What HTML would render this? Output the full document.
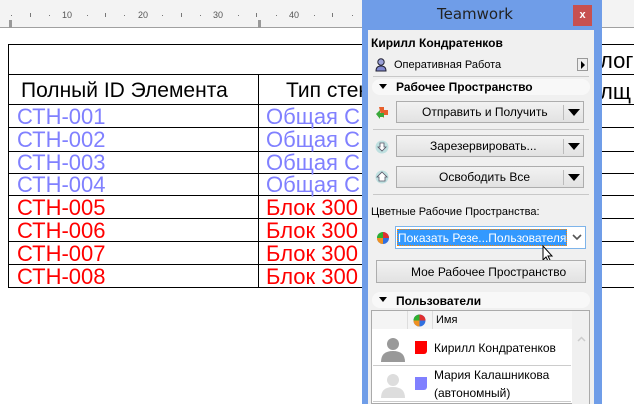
<!DOCTYPE html>
<html><head><meta charset="utf-8"><style>
*{margin:0;padding:0;box-sizing:border-box}
body{width:634px;height:404px;overflow:hidden;background:#fff;font-family:"Liberation Sans",sans-serif;position:relative}
.abs{position:absolute}
.ruler{left:0;top:0;width:634px;height:28px;background:#f3f3f3;border-bottom:1px solid #a0a0a0}
.tk{position:absolute;background:#777;width:1px}
.rn{position:absolute;top:10px;font-size:9px;color:#555}
.hl{position:absolute;height:1px;background:#000}
.vl{position:absolute;width:1px;background:#000}
.t{position:absolute;font-size:22px;line-height:22px;white-space:nowrap}
.b{color:#8080ff}.r{color:#ff0000}
.panel{left:362px;top:0;width:240px;height:404px;background:#6f9de8}
.inner{left:368px;top:30px;width:226px;height:374px;background:#f0f0f0}
.s{font-size:12px;font-family:"Liberation Sans",sans-serif;position:absolute;white-space:nowrap;color:#000}
.btn{position:absolute;border:1px solid #adadad;background:linear-gradient(#f2f2f2,#e2e2e2);height:22px}
.sep{position:absolute;height:1px;background:#c8c8c8;left:373px;width:216px}
.tri{position:absolute;width:0;height:0;border-left:6px solid transparent;border-right:6px solid transparent;border-top:7px solid #000}
</style></head><body>
<div class="abs ruler">
<div class="tk" style="left:9px;top:20px;height:8px;width:3px;background:#999"></div>
<div class="tk" style="left:258px;top:20px;height:8px;width:3px;background:#999"></div>
<div class="tk" style="left:30px;top:13px;height:4px"></div>
<div class="tk" style="left:105px;top:13px;height:4px"></div>
<div class="tk" style="left:181px;top:13px;height:4px"></div>
<div class="tk" style="left:256px;top:13px;height:4px"></div>
<div class="tk" style="left:332px;top:13px;height:4px"></div>
<div class="tk" style="left:11px;top:15px;height:1px"></div>
<div class="tk" style="left:49px;top:15px;height:1px"></div>
<div class="tk" style="left:87px;top:15px;height:1px"></div>
<div class="tk" style="left:124px;top:15px;height:1px"></div>
<div class="tk" style="left:162px;top:15px;height:1px"></div>
<div class="tk" style="left:200px;top:15px;height:1px"></div>
<div class="tk" style="left:238px;top:15px;height:1px"></div>
<div class="tk" style="left:276px;top:15px;height:1px"></div>
<div class="tk" style="left:314px;top:15px;height:1px"></div>
<div class="tk" style="left:352px;top:15px;height:1px"></div>
<span class="rn" style="left:62px">10</span><span class="rn" style="left:138px">20</span><span class="rn" style="left:213px">30</span><span class="rn" style="left:289px">40</span>
</div>
<div class="hl" style="left:8px;top:44px;width:626px"></div>
<div class="hl" style="left:8px;top:74px;width:626px"></div>
<div class="hl" style="left:8px;top:104px;width:626px"></div>
<div class="hl" style="left:8px;top:127px;width:626px"></div>
<div class="hl" style="left:8px;top:151px;width:626px"></div>
<div class="hl" style="left:8px;top:173px;width:626px"></div>
<div class="hl" style="left:8px;top:195px;width:626px"></div>
<div class="hl" style="left:8px;top:218px;width:626px"></div>
<div class="hl" style="left:8px;top:241px;width:626px"></div>
<div class="hl" style="left:8px;top:264px;width:626px"></div>
<div class="hl" style="left:8px;top:287px;width:626px"></div>
<div class="vl" style="left:8px;top:44px;height:244px"></div>
<div class="vl" style="left:258px;top:74px;height:214px"></div>
<div class="t" style="left:21px;top:80px;font-size:21px">Полный ID Элемента</div>
<div class="t" style="left:286px;top:80px;font-size:21px">Тип стены</div>
<div class="t" style="left:600px;top:50px">лог</div>
<div class="t" style="left:600px;top:81px">лщ</div>
<div class="t b" style="left:17px;top:106px">СТН-001</div><div class="t b" style="left:266px;top:106px">Общая С</div>
<div class="t b" style="left:17px;top:129px">СТН-002</div><div class="t b" style="left:266px;top:129px">Общая С</div>
<div class="t b" style="left:17px;top:152px">СТН-003</div><div class="t b" style="left:266px;top:152px">Общая С</div>
<div class="t b" style="left:17px;top:174px">СТН-004</div><div class="t b" style="left:266px;top:174px">Общая С</div>
<div class="t r" style="left:17px;top:197px">СТН-005</div><div class="t r" style="left:266px;top:197px">Блок 300</div>
<div class="t r" style="left:17px;top:220px">СТН-006</div><div class="t r" style="left:266px;top:220px">Блок 300</div>
<div class="t r" style="left:17px;top:243px">СТН-007</div><div class="t r" style="left:266px;top:243px">Блок 300</div>
<div class="t r" style="left:17px;top:266px">СТН-008</div><div class="t r" style="left:266px;top:266px">Блок 300</div>

<div class="abs panel"></div>
<div class="abs" style="left:362px;top:5px;width:226px;text-align:center;font-size:15px;color:#222;font-family:'DejaVu Sans',sans-serif">Teamwork</div>
<div class="abs" style="left:573px;top:5px;width:19px;height:21px;background:#c75050;color:#fff;font-size:11px;text-align:center;line-height:21px;font-weight:bold">x</div>
<div class="abs inner"></div>
<div class="s" style="left:371px;top:36px;font-weight:bold">Кирилл Кондратенков</div>
<svg class="abs" style="left:375px;top:58px" width="12" height="14"><circle cx="6" cy="4" r="3.2" fill="#9aa0d8" stroke="#223" stroke-width="1"/><path d="M1 13 Q1 8 6 8 Q11 8 11 13Z" fill="#8088d0" stroke="#223"/></svg>
<div class="s" style="left:394px;top:59px;font-size:11px">Оперативная Работа</div>
<div class="abs" style="left:577px;top:58px;width:11px;height:13px;border:1px solid #999;background:#eee"><div style="position:absolute;left:3px;top:2px;border-top:4px solid transparent;border-bottom:4px solid transparent;border-left:4px solid #000"></div></div>
<div class="sep" style="top:76px"></div>
<div class="abs" style="left:372px;top:79px;width:218px;height:16px;background:#f8f8f8;border-radius:8px"></div>
<div class="tri" style="left:379px;top:84px;border-width:5px 4px 0 4px"></div>
<div class="s" style="left:396px;top:80px;font-weight:bold">Рабочее Пространство</div>
<svg class="abs" style="left:375px;top:106px" width="14" height="14"><path d="M4 1h5v3h4v5h-4v3l-3-3z" fill="#e8602c"/><path d="M1 8l4-4v3h4v4h-4v2z" fill="#3aa83a"/></svg>
<div class="btn" style="left:396px;top:101px;width:188px"><span class="s" style="left:25px;top:3px">Отправить и Получить</span><div style="position:absolute;left:166px;top:3px;width:1px;height:15px;background:#bbb"></div><div class="tri" style="left:171px;top:7px"></div></div>
<div class="sep" style="top:129px"></div>
<svg class="abs" style="left:375px;top:140px" width="14" height="14"><circle cx="7" cy="7" r="6.5" fill="#bfe0e0"/><path d="M5 3h4v4h2l-4 4-4-4h2z" fill="#fff" stroke="#556" stroke-width=".8"/></svg>
<div class="btn" style="left:396px;top:135px;width:188px"><span class="s" style="left:33px;top:3px">Зарезервировать...</span><div style="position:absolute;left:166px;top:3px;width:1px;height:15px;background:#bbb"></div><div class="tri" style="left:171px;top:7px"></div></div>
<svg class="abs" style="left:375px;top:170px" width="14" height="14"><circle cx="7" cy="7" r="6.5" fill="#bfe0e0"/><path d="M7 2l5 5h-2v4h-6v-4h-2z" fill="#fff" stroke="#556" stroke-width=".8"/></svg>
<div class="btn" style="left:396px;top:166px;width:188px"><span class="s" style="left:42px;top:3px">Освободить Все</span><div style="position:absolute;left:166px;top:3px;width:1px;height:15px;background:#bbb"></div><div class="tri" style="left:171px;top:7px"></div></div>
<div class="sep" style="top:194px"></div>
<div class="s" style="left:371px;top:206px;font-size:11px">Цветные Рабочие Пространства:</div>
<svg class="abs" style="left:376px;top:231px" width="14" height="14"><circle cx="7" cy="7" r="6" fill="#3070e0"/><path d="M7 7L7 1A6 6 0 0 1 13 7z" fill="#e03030"/><path d="M7 7L1 7A6 6 0 0 1 7 1z" fill="#30b030"/><path d="M7 7L7 13A6 6 0 0 1 1 7z" fill="#f09020"/></svg>
<div class="abs" style="left:395px;top:226px;width:191px;height:23px;border:1px solid #7eb4ea;background:#fff"></div>
<div class="abs" style="left:397px;top:229px;width:170px;height:17px;background:#3399ff;border:1px dotted #f80"></div>
<div class="s" style="left:398px;top:231px;color:#fff">Показать Резе...Пользователям</div>
<svg class="abs" style="left:572px;top:234px" width="10" height="7"><path d="M1 1l4 4 4-4" stroke="#555" stroke-width="1.6" fill="none"/></svg>
<svg class="abs" style="left:542px;top:245px" width="12" height="18"><path d="M1 1v14l3-3 3 6 2-1-3-6h4z" fill="#fff" stroke="#000"/></svg>
<div class="btn" style="left:376px;top:260px;width:210px;height:23px"><span class="s" style="left:34px;top:4px">Мое Рабочее Пространство</span></div>
<div class="abs" style="left:372px;top:292px;width:218px;height:16px;background:#f8f8f8;border-radius:8px"></div>
<div class="tri" style="left:379px;top:297px;border-width:5px 4px 0 4px"></div>
<div class="s" style="left:396px;top:294px;font-weight:bold">Пользователи</div>
<div class="abs" style="left:371px;top:310px;width:219px;height:94px;border:1px solid #aaa;background:#fff"></div>
<div class="abs" style="left:372px;top:311px;width:200px;height:18px;background:#f4f4f4"></div>
<div class="abs" style="left:572px;top:311px;width:17px;height:93px;background:#f0f0f0"></div>
<div class="abs" style="left:407px;top:311px;width:1px;height:18px;background:#ddd"></div>
<div class="abs" style="left:432px;top:311px;width:1px;height:18px;background:#ddd"></div>
<svg class="abs" style="left:413px;top:314px" width="13" height="13"><circle cx="6.5" cy="6.5" r="6" fill="#3070e0"/><path d="M6.5 6.5V.5A6 6 0 0 1 12.5 6.5z" fill="#e03030"/><path d="M6.5 6.5H.5A6 6 0 0 1 6.5 .5z" fill="#30b030"/><path d="M6.5 6.5v6A6 6 0 0 1 .5 6.5z" fill="#f09020"/></svg>
<div class="s" style="left:436px;top:314px;font-size:11px">Имя</div>
<svg class="abs" style="left:577px;top:336px" width="9" height="6"><path d="M1 5l3.5-3.5L8 5" stroke="#ccc" stroke-width="1.5" fill="none"/></svg>
<svg class="abs" style="left:380px;top:336px" width="26" height="26"><circle cx="13" cy="8" r="6" fill="#999"/><path d="M1 26Q1 15 13 15Q25 15 25 26z" fill="#999"/></svg>
<div class="abs" style="left:415px;top:341px;width:12px;height:13px;background:#f00;border-radius:0 0 3px 0"></div>
<div class="s" style="left:434px;top:341px">Кирилл Кондратенков</div>
<div class="abs" style="left:373px;top:365px;width:198px;height:1px;background:#ccc"></div>
<svg class="abs" style="left:380px;top:372px" width="26" height="26"><circle cx="13" cy="8" r="6" fill="#ddd"/><path d="M1 26Q1 15 13 15Q25 15 25 26z" fill="#ddd"/></svg>
<div class="abs" style="left:415px;top:377px;width:12px;height:13px;background:#8080ff;border-radius:0 0 3px 0"></div>
<div class="s" style="left:434px;top:368px">Мария Калашникова</div>
<div class="s" style="left:434px;top:386px">(автономный)</div>
<div class="abs" style="left:373px;top:401px;width:198px;height:1px;background:#ccc"></div>
</body></html>
